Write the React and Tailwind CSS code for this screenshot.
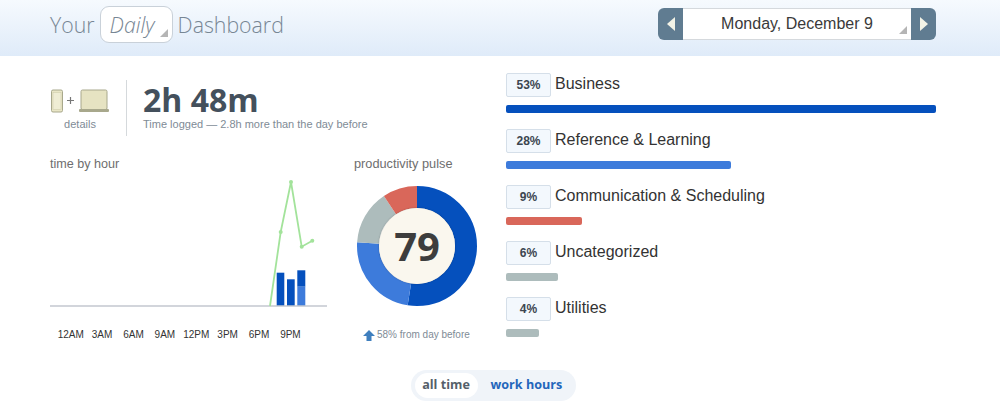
import React from "react";

const categories = [
  { pct: "53%", name: "Business", width: "w-[430px]", color: "bg-[#0550bd]" },
  { pct: "28%", name: "Reference & Learning", width: "w-[225px]", color: "bg-[#3d7bdb]" },
  { pct: "9%", name: "Communication & Scheduling", width: "w-[76px]", color: "bg-[#d9675a]" },
  { pct: "6%", name: "Uncategorized", width: "w-[52px]", color: "bg-[#adbcbc]" },
  { pct: "4%", name: "Utilities", width: "w-[33px]", color: "bg-[#adbcbc]" },
];

const hours = ["12AM", "3AM", "6AM", "9AM", "12PM", "3PM", "6PM", "9PM"];

const pulse = [
  { value: 52.5, color: "#0550bd", offset: 0 },
  { value: 23.5, color: "#3d7bdb", offset: 52.5 },
  { value: 14.7, color: "#adbcbc", offset: 76 },
  { value: 9.3, color: "#d9675a", offset: 90.7 },
];

const Corner = () => (
  <svg width="10" height="10" viewBox="0 0 10 10" className="absolute right-[3px] bottom-[4px]">
    <polygon points="9,1 9,9 1,9" fill="#b5b5b5" />
  </svg>
);

const Devices = () => (
  <svg width="60" height="24" viewBox="0 0 60 24">
    <rect x="1.5" y="1" width="11" height="22" rx="1.5" fill="#e9e6c6" stroke="#a8a88c" />
    <rect x="3" y="3.5" width="8" height="17" fill="#efedd4" stroke="#c9c7a6" strokeWidth="0.5" />
    <path d="M17 11.5h7M20.500 8v7" stroke="#777" strokeWidth="1.2" />
    <rect x="31" y="1" width="26" height="19.500" rx="1.5" fill="#e6e3c2" stroke="#a8a88c" />
    <rect x="29" y="20" width="30" height="3" rx="1" fill="#a8a88c" />
  </svg>
);

const HourChart = () => (
  <svg width="280" height="135" viewBox="50 175 280 135" className="block">
    <rect x="276.7" y="272.7" width="7.6" height="33.3" fill="#0550bd" />
    <rect x="287" y="279.3" width="7.7" height="26.7" fill="#0550bd" />
    <rect x="297.3" y="270.3" width="8" height="16.4" fill="#0550bd" />
    <rect x="297.3" y="286.7" width="8" height="19.3" fill="#3d7bdb" />
    <line x1="50" y1="306" x2="327" y2="306" stroke="#c3c7cf" strokeWidth="1.5" />
    <polyline
      points="270,306 280.7,232 291,182 301.7,246.7 312.3,240.7"
      fill="none"
      stroke="#a3e39b"
      strokeWidth="1.8"
    />
    <circle cx="280.7" cy="232" r="2" fill="#a3e39b" />
    <circle cx="291" cy="182" r="2" fill="#a3e39b" />
    <circle cx="301.7" cy="246.7" r="2" fill="#a3e39b" />
    <circle cx="312.3" cy="240.7" r="2" fill="#a3e39b" />
  </svg>
);

const PulseDonut = () => (
  <div className="relative w-[120px] h-[120px]">
    <svg width="120" height="120" viewBox="0 0 120 120" className="-rotate-90">
      {pulse.map((s) => (
        <circle
          key={s.color}
          cx="60"
          cy="60"
          r="49"
          fill="none"
          stroke={s.color}
          strokeWidth="22"
          pathLength="100"
          strokeDasharray={`${s.value} ${100 - s.value}`}
          strokeDashoffset={-s.offset}
        />
      ))}
    </svg>
    <div className="absolute left-[22px] top-[22px] w-[76px] h-[76px] rounded-full bg-[#faf7ee] flex items-center justify-center text-[40px] font-bold text-[#3d3d3d] font-['Open_Sans',sans-serif] shadow-[0_0_2px_rgba(0,0,0,0.3)]">
      79
    </div>
  </div>
);

export default function App() {
  return (
    <div className="w-[1000px] h-[418px] overflow-hidden bg-white font-['Liberation_Sans',Arial,sans-serif]">
      <header className="h-[56px] bg-gradient-to-b from-[#f6fafe] to-[#dfebf9] flex items-center justify-between pl-[50px] pr-[64px]">
        <div className="flex items-center mt-[-7px] text-[21.3px] text-[#778694] font-['Open_Sans',sans-serif] font-light">
          <span>Your</span>
          <div className="relative ml-[5px] mr-[5px] w-[73px] h-[37px] rounded-[9px] border border-[#c9d1d9] bg-white flex items-center pl-[9px] italic">
            Daily
            <Corner />
          </div>
          <span>Dashboard</span>
        </div>
        <div className="flex h-[32px] w-[278px] mt-[-9px]">
          <button className="w-[25px] bg-[#607c91] rounded-l-[6px] flex items-center justify-center">
            <svg width="10" height="16" viewBox="0 0 10 16">
              <polygon points="9,1 9,15 1,8" fill="#f3f3e6" />
            </svg>
          </button>
          <div className="relative flex-1 bg-white border-y border-[#d5d9dd] flex items-center justify-center text-[16px] text-[#3a3a3a]">
            Monday, December 9
            <Corner />
          </div>
          <button className="w-[25px] bg-[#607c91] rounded-r-[6px] flex items-center justify-center">
            <svg width="10" height="16" viewBox="0 0 10 16">
              <polygon points="1,1 1,15 9,8" fill="#f3f3e6" />
            </svg>
          </button>
        </div>
      </header>

      <main className="flex pl-[50px] pr-[64px] pt-[17px]">
        <section className="w-[456px]">
          <div className="flex items-center h-[56px] mt-[7px]">
            <div className="w-[60px] flex flex-col items-center pt-[4px]">
              <Devices />
              <span className="text-[11px] leading-[13px] mt-[5px] text-[#808b96]">details</span>
            </div>
            <div className="w-px h-[56px] bg-[#d5d9dc] ml-[16px] mr-[16px]" />
            <div>
              <div className="text-[32px] leading-[30px] font-bold text-[#44505c] font-['Open_Sans',sans-serif]">
                2h 48m
              </div>
              <div className="text-[11px] leading-[13px] mt-[3px] text-[#808b96]">
                Time logged — 2.8h more than the day before
              </div>
            </div>
          </div>

          <div className="flex mt-[20px]">
            <div className="w-[304px]">
              <div className="text-[12.6px] leading-[16px] text-[#6e6e6e]">time by hour</div>
              <div className="mt-[3px]">
                <HourChart />
              </div>
              <div className="flex pl-[5px] mt-[19px]">
                {hours.map((h) => (
                  <span key={h} className="w-[31.4px] text-center text-[10px] leading-[12px] text-[#333]">
                    {h}
                  </span>
                ))}
              </div>
            </div>
            <div className="flex flex-col">
              <div className="text-[12.75px] leading-[16px] text-[#6e6e6e]">productivity pulse</div>
              <div className="mt-[14px] ml-[3px]">
                <PulseDonut />
              </div>
              <div className="flex items-center mt-[23px] ml-[9px] text-[10px] leading-[12px] text-[#808b96]">
                <svg width="12" height="11" viewBox="0 0 12 11" className="mr-[2px]">
                  <path d="M6 0 12 6H8.500V11H3.500V6H0Z" fill="#3f7fbe" />
                </svg>
                58% from day before
              </div>
            </div>
          </div>
        </section>

        <section className="w-[430px] flex flex-col gap-[16px]">
          {categories.map((c) => (
            <div key={c.name}>
              <div className="flex items-center h-[24px]">
                <div className="w-[45px] h-[24px] rounded-[2px] border border-[#d5dfe9] bg-[#f3f8fd] flex items-center justify-center text-[12px] font-bold text-[#3c4650]">
                  {c.pct}
                </div>
                <span className="ml-[4px] text-[16px] text-[#333] -mt-[2px]">{c.name}</span>
              </div>
              <div className={`h-[8px] mt-[8px] rounded-[2px] ${c.width} ${c.color}`} />
            </div>
          ))}
        </section>
      </main>

      <div className="flex justify-center pr-[14px] mt-[29px]">
        <div className="flex items-center h-[31px] w-[165px] rounded-full bg-[#f0f4f9] px-[4px] text-[12.6px] font-bold font-['Open_Sans',sans-serif]">
          <span className="w-[63px] h-[25px] rounded-full bg-white flex items-center justify-center text-[#555f69]">all time</span>
          <span className="ml-[13px] text-[#2466bb]">work hours</span>
        </div>
      </div>
    </div>
  );
}
